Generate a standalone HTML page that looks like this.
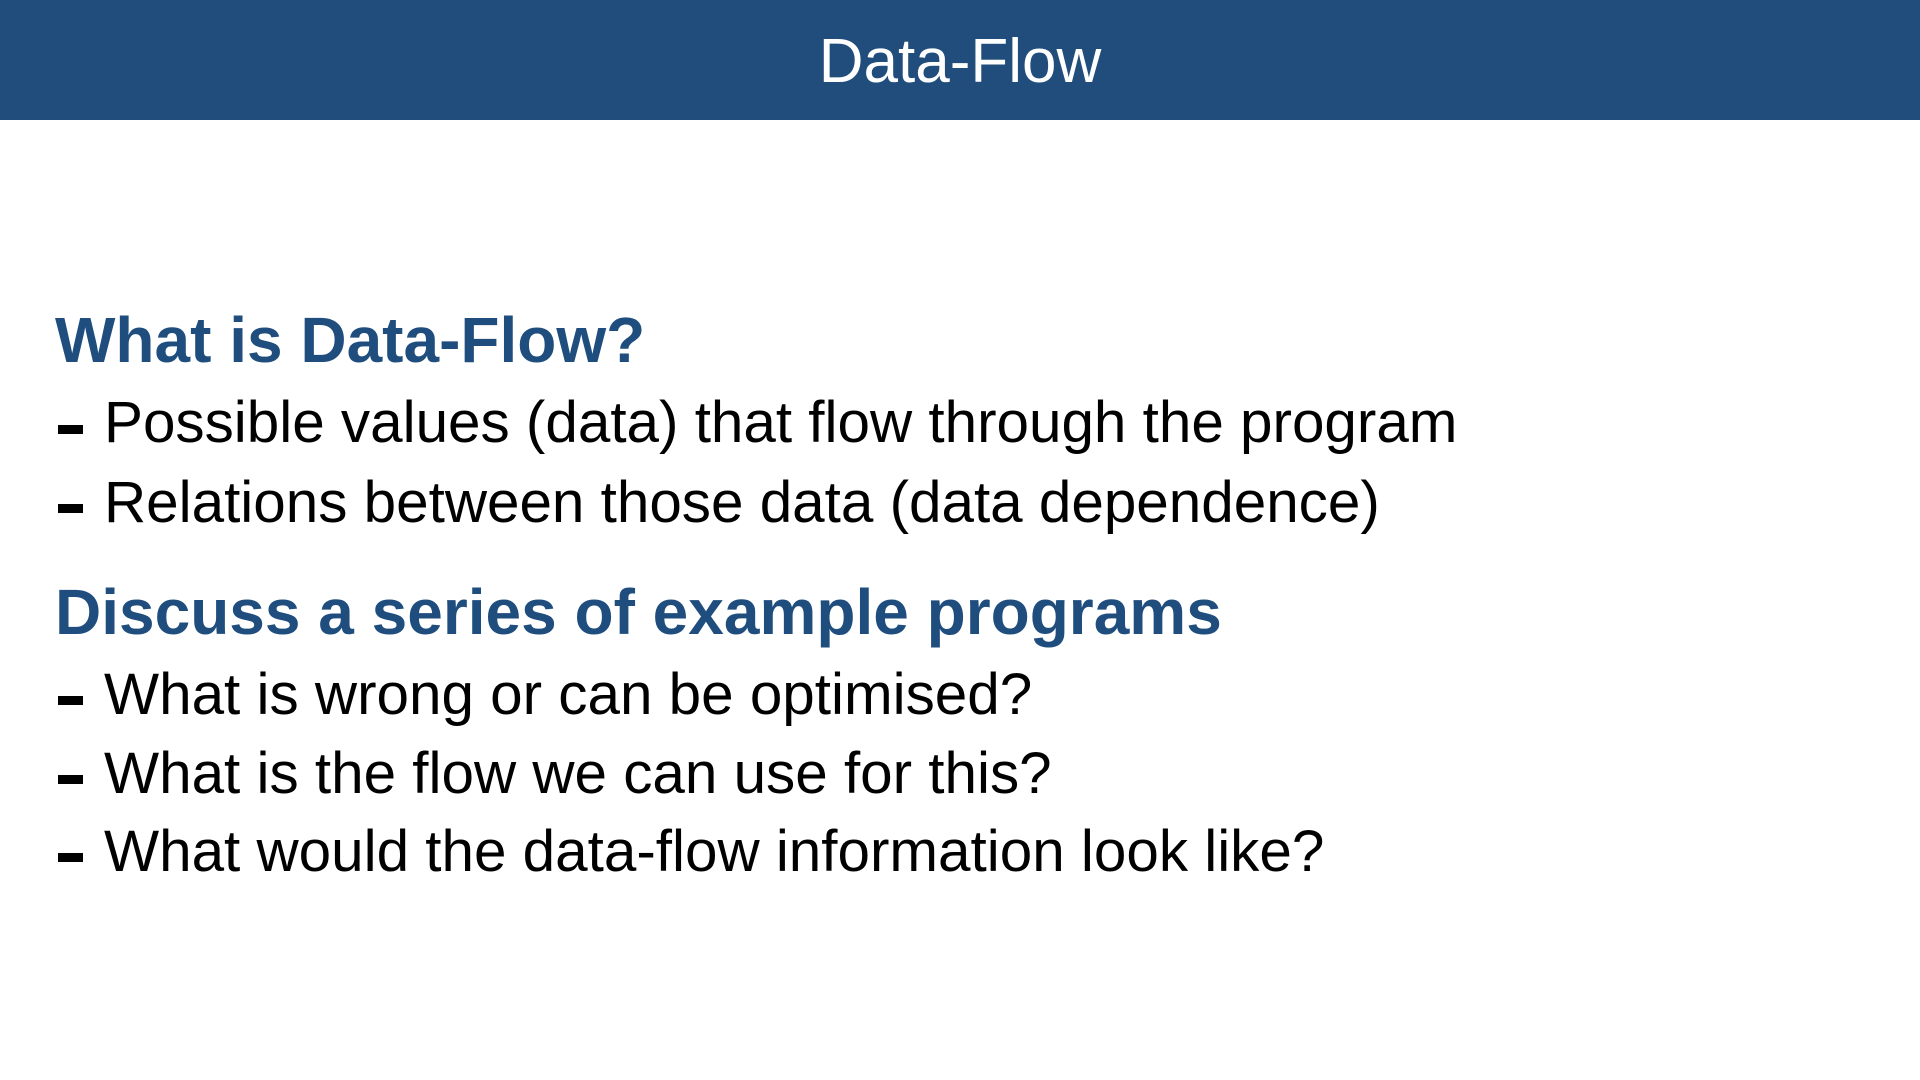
<!DOCTYPE html>
<html><head><meta charset="utf-8"><style>
body{margin:0;width:1920px;height:1080px;background:#fff;position:relative;overflow:hidden;font-family:"Liberation Sans",Arial,sans-serif}
.hdr{position:absolute;left:0;top:0;width:1920px;height:120px;background:#204d7b}
.t{position:absolute;left:0;width:1920px;text-align:center;color:#fff;font-size:62px;line-height:1;top:31px}
.h{position:absolute;left:55px;color:#1f4e7e;font-weight:bold;font-size:64px;line-height:1;white-space:nowrap}
.b{position:absolute;left:104px;color:#000;font-size:58.4px;line-height:1;white-space:nowrap}
.d{position:absolute;left:58px;width:25px;height:9px;background:#000}
</style></head><body>
<div class="hdr"></div>
<div class="t">Data-Flow</div>
<div class="h" style="top:308px">What is Data-Flow?</div>
<div class="d" style="top:425px"></div><div class="b" style="top:394px">Possible values (data) that flow through the program</div>
<div class="d" style="top:504px"></div><div class="b" style="top:474px">Relations between those data (data dependence)</div>
<div class="h" style="top:580px">Discuss a series of example programs</div>
<div class="d" style="top:696px"></div><div class="b" style="top:666px">What is wrong or can be optimised?</div>
<div class="d" style="top:775px"></div><div class="b" style="top:745px">What is the flow we can use for this?</div>
<div class="d" style="top:853px"></div><div class="b" style="top:823px">What would the data-flow information look like?</div>
</body></html>
